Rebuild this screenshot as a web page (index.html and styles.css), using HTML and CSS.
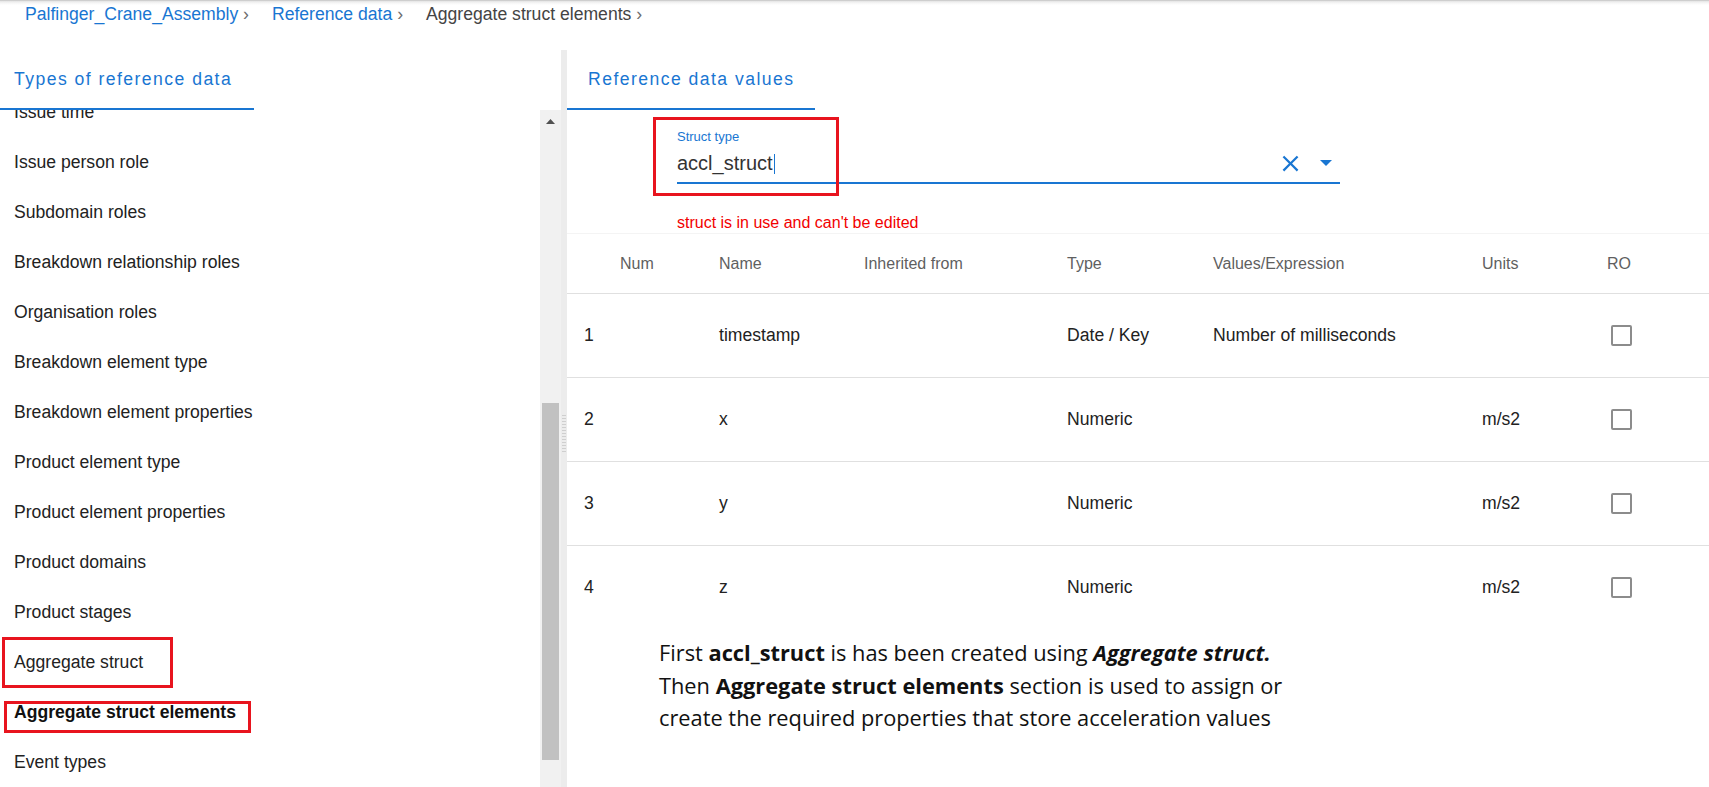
FILE: index.html
```html
<!DOCTYPE html>
<html lang="en">
<head>
<meta charset="utf-8">
<title>Aggregate struct elements</title>
<link rel="stylesheet" href="styles.css">
</head>
<body>
<nav class="crumbs">
  <a class="crumb link">Palfinger_Crane_Assembly <span class="chev">›</span></a>
  <a class="crumb link">Reference data <span class="chev">›</span></a>
  <span class="crumb current">Aggregate struct elements <span class="chev">›</span></span>
</nav>
<main class="main">
  <section class="left">
    <div class="tabhead"><div class="tab tab-left">Types of reference data</div></div>
    <div class="leftbody">
      <div class="list">
        <ul class="items">
          <li>Issue time</li>
          <li>Issue person role</li>
          <li>Subdomain roles</li>
          <li>Breakdown relationship roles</li>
          <li>Organisation roles</li>
          <li>Breakdown element type</li>
          <li>Breakdown element properties</li>
          <li>Product element type</li>
          <li>Product element properties</li>
          <li>Product domains</li>
          <li>Product stages</li>
          <li>Aggregate struct</li>
          <li class="active">Aggregate struct elements</li>
          <li>Event types</li>
        </ul>
      </div>
      <div class="vscroll">
        <div class="sb-up"><svg width="9" height="5" viewBox="0 0 9 5"><polygon points="0,5 4.5,0 9,5" fill="#505050"/></svg></div>
        <div class="sb-thumb"></div>
      </div>
    </div>
  </section>
  <div class="divider"><div class="grip"></div></div>
  <section class="right">
    <div class="tabhead"><div class="tab tab-right">Reference data values</div></div>
    <div class="form">
      <div class="field">
        <div class="flabel">Struct type</div>
        <div class="control">
          <div class="value">accl_struct<span class="caret"></span></div>
          <svg class="clear" width="27" height="27" viewBox="0 0 24 24"><path d="M19 6.41L17.59 5 12 10.59 6.41 5 5 6.41 10.59 12 5 17.59 6.41 19 12 13.41 17.59 19 19 17.59 13.41 12z" fill="#1976d2"/></svg>
          <svg class="drop" width="12" height="6" viewBox="0 0 12 6"><polygon points="0,0 12,0 6,6" fill="#1976d2"/></svg>
        </div>
      </div>
      <div class="error">struct is in use and can't be edited</div>
    </div>
    <div class="table">
      <div class="row head">
        <div class="c c1">Num</div><div class="c">Name</div><div class="c">Inherited from</div><div class="c">Type</div><div class="c">Values/Expression</div><div class="c">Units</div><div class="c">RO</div>
      </div>
      <div class="row">
        <div class="c c1">1</div><div class="c">timestamp</div><div class="c"></div><div class="c">Date / Key</div><div class="c">Number of milliseconds</div><div class="c"></div><div class="c"><span class="cb"></span></div>
      </div>
      <div class="row">
        <div class="c c1">2</div><div class="c">x</div><div class="c"></div><div class="c">Numeric</div><div class="c"></div><div class="c">m/s2</div><div class="c"><span class="cb"></span></div>
      </div>
      <div class="row">
        <div class="c c1">3</div><div class="c">y</div><div class="c"></div><div class="c">Numeric</div><div class="c"></div><div class="c">m/s2</div><div class="c"><span class="cb"></span></div>
      </div>
      <div class="row last">
        <div class="c c1">4</div><div class="c">z</div><div class="c"></div><div class="c">Numeric</div><div class="c"></div><div class="c">m/s2</div><div class="c"><span class="cb"></span></div>
      </div>
    </div>
    <p class="note">First <b>accl_struct</b> is has been created using <b><i>Aggregate struct.</i></b><br>Then <b>Aggregate struct elements</b> section is used to assign or<br>create the required properties that store acceleration values</p>
  </section>
</main>
<div class="mark mark-field"></div>
<div class="mark mark-agg"></div>
<div class="mark mark-aggel"></div>
</body>
</html>
```

FILE: styles.css
```css
html, body {
  margin: 0;
  padding: 0;
}
body {
  width: 1709px;
  height: 787px;
  overflow: hidden;
  background: #fff;
  font-family: "Liberation Sans", Arial, sans-serif;
  font-size: 17.6px;
  color: #222;
  position: relative;
}

/* breadcrumb */
.crumbs {
  height: 50px;
  display: flex;
  align-items: flex-start;
  padding-left: 25px;
  box-sizing: border-box;
  background: linear-gradient(#b8b8b8 0, #e4e4e4 1px, #f6f6f6 3px, #fff 5px);
}
.crumb {
  line-height: 28px;
  margin-right: 23px;
  white-space: nowrap;
}
.link { color: #1976d2; }
.current { color: #444; }
.chev { color: #6d6d6d; }

.main {
  display: flex;
  height: 737px;
}

/* left panel */
.left {
  width: 561px;
  display: flex;
  flex-direction: column;
}
.tabhead {
  height: 60px;
  flex: none;
  display: flex;
  position: relative;
  z-index: 2;
  background: #fff;
}
.tab {
  height: 60px;
  box-sizing: border-box;
  border-bottom: 2px solid #1976d2;
  color: #1976d2;
  line-height: 58px;
  letter-spacing: 1.45px;
}
.tab-left { width: 254px; padding-left: 14px; }
.tab-right { width: 248px; padding-left: 21px; }

.leftbody {
  flex: 1;
  display: flex;
  min-height: 0;
}
.list {
  flex: 1;
  overflow: hidden;
}
.items {
  list-style: none;
  margin: -23px 0 0 0;
  padding: 0;
}
.items li {
  height: 50px;
  line-height: 50px;
  padding-left: 14px;
  color: #222;
  white-space: nowrap;
}
.items li.active { font-weight: bold; color: #111; }

.vscroll {
  width: 21px;
  background: #f1f1f1;
  display: flex;
  flex-direction: column;
}
.sb-up {
  height: 22px;
  display: flex;
  align-items: center;
  justify-content: center;
}
.sb-up svg { margin-left: -1px; }
.sb-thumb {
  margin-top: 271px;
  margin-left: 2px;
  width: 17px;
  height: 357px;
  background: #c1c1c1;
}

.divider {
  width: 6px;
  background: #ececec;
}
.grip {
  margin-top: 364px;
  height: 38px;
  margin-left: 1px;
  width: 4px;
  background-image: radial-gradient(circle, #cfcfcf 0.9px, transparent 1px);
  background-size: 2px 3px;
}

/* right panel */
.right {
  flex: 1;
  display: flex;
  flex-direction: column;
}
.form {
  padding: 18px 0 0 110px;
}
.field { width: 663px; }
.flabel {
  font-size: 13px;
  line-height: 18px;
  color: #1976d2;
  margin-bottom: 4px;
}
.control {
  display: flex;
  align-items: center;
  height: 26px;
  padding-bottom: 6px;
  padding-right: 8px;
  border-bottom: 2px solid #1976d2;
}
.value {
  flex: 1;
  font-size: 20px;
  line-height: 26px;
  color: #333;
}
.caret {
  display: inline-block;
  width: 1.5px;
  height: 20px;
  background: #1976d2;
  vertical-align: -4px;
  margin-left: 1px;
}
.clear { display: block; }
.drop { display: block; margin-left: 16px; }
.error {
  margin-top: 29px;
  font-size: 16px;
  line-height: 20px;
  color: #f20000;
}

.table { border-top: 1px solid #f4f4f4; }
.row {
  display: grid;
  grid-template-columns: 152px 145px 203px 146px 269px 125px 1fr;
  height: 83px;
  align-items: center;
  border-bottom: 1px solid #e0e0e0;
}
.row.last { border-bottom: none; }
.row.head {
  height: 59px;
  font-size: 16px;
  color: #5f5f5f;
}
.c { white-space: nowrap; }
.c1 { padding-left: 17px; }
.head .c1 { padding-left: 53px; }
.cb {
  display: block;
  width: 21px;
  height: 21px;
  box-sizing: border-box;
  border: 2px solid #8c8c8c;
  border-radius: 2px;
  margin-left: 4px;
}

.note {
  margin: 8px 0 0 92px;
  font-family: "Open Sans", "Noto Sans", sans-serif;
  font-size: 21.8px;
  line-height: 32.5px;
  color: #111;
}
.note b { font-weight: 700; }

/* red annotation boxes drawn over the screenshot */
.mark {
  position: absolute;
  border: 3px solid #e8141e;
  box-sizing: border-box;
  pointer-events: none;
}
.mark-field { left: 653px; top: 117px; width: 186px; height: 79px; }
.mark-agg { left: 2px; top: 637px; width: 171px; height: 51px; }
.mark-aggel { left: 4px; top: 701px; width: 247px; height: 32px; }
```
